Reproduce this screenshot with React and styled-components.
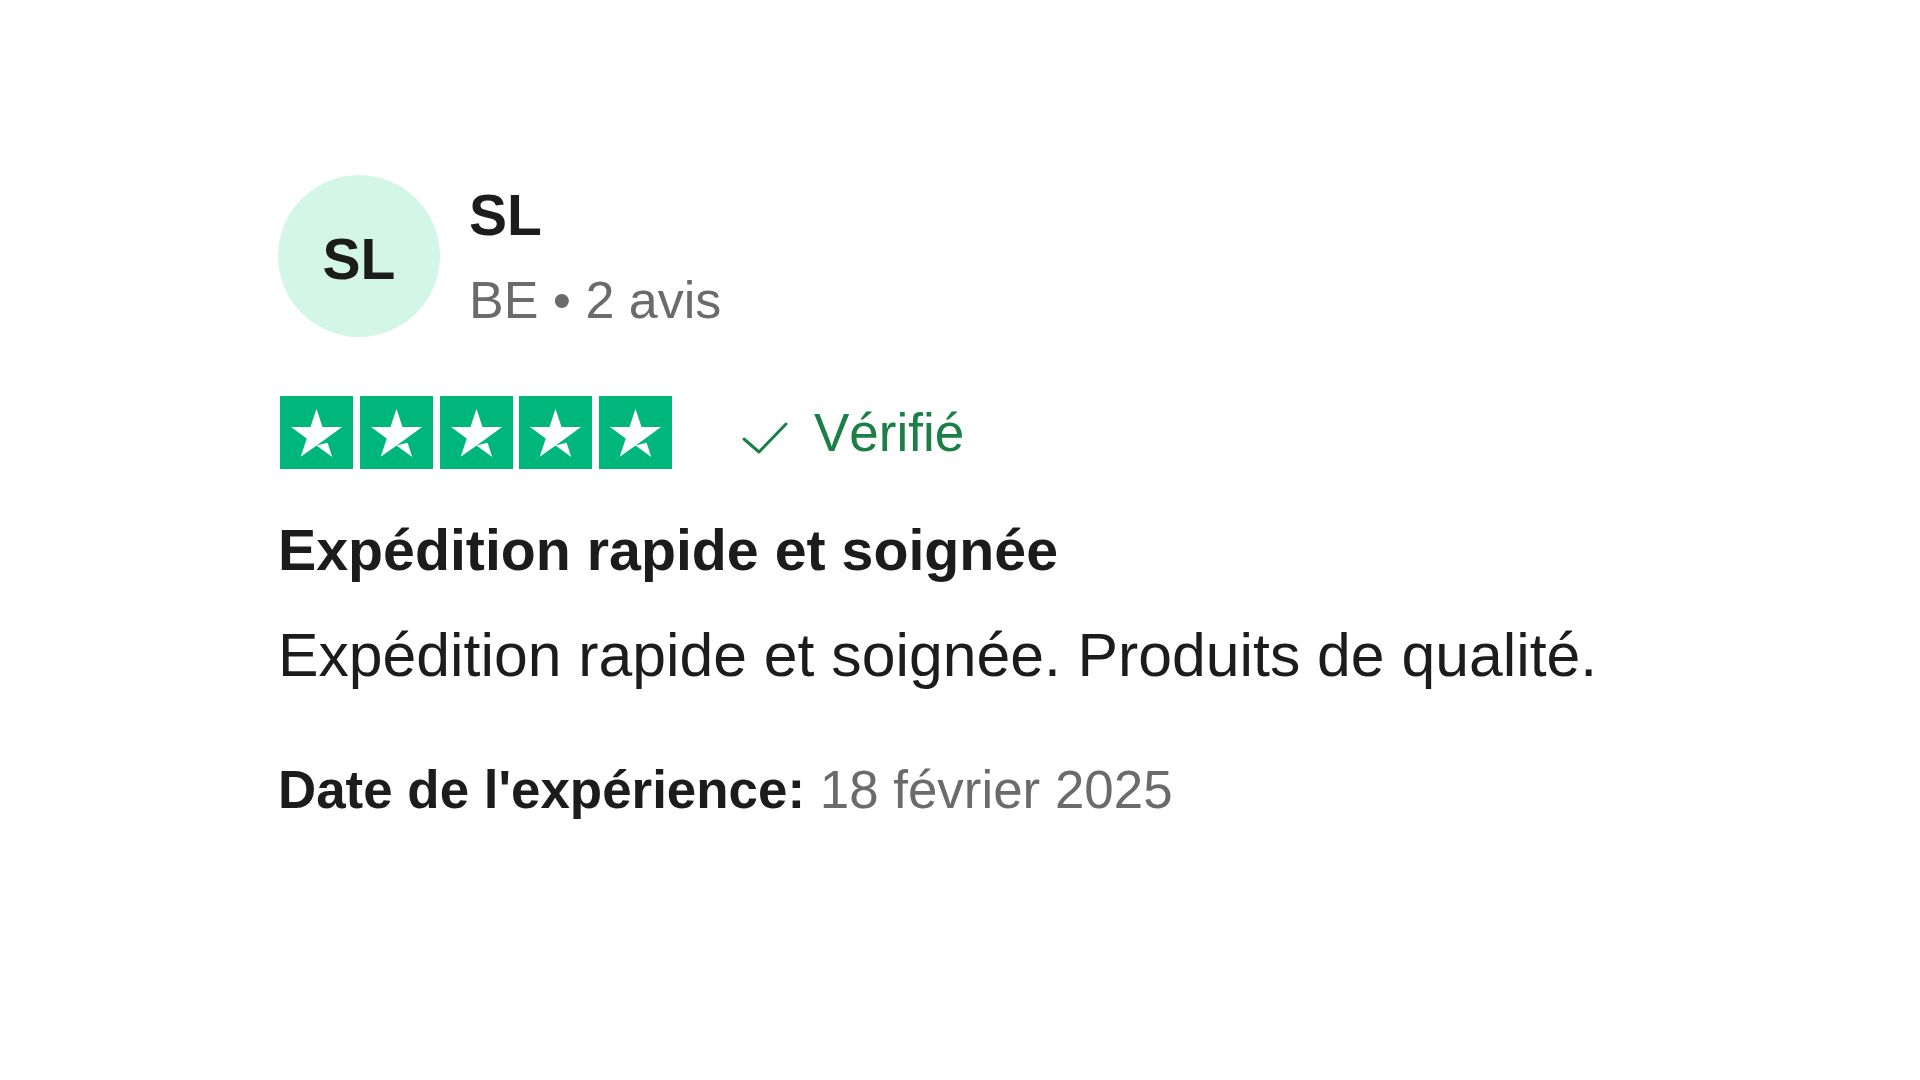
import React from 'react';
import styled, { createGlobalStyle } from 'styled-components';

const text_dark = '#1c1c1c';
const text_grey = '#6b6b6b';
const star_green = '#00b67a';
const verified_green = '#1b7f47';

const GlobalStyle = createGlobalStyle`
  html, body {
    margin: 0;
    padding: 0;
    background: #ffffff;
  }
  body {
    font-family: "Liberation Sans", Arial, Helvetica, sans-serif;
    color: ${text_dark};
  }
`;

const StarGlyph = () => (
  <svg width="73" height="73" viewBox="0 -0.35 24 24">
    <path
      fill="#ffffff"
      d="M12 15.934l3.65-.925 1.525 4.7L12 15.934zm8.4-6.075h-6.425L12 3.809l-1.975 6.05H3.6l5.2 3.75-1.975 6.05 5.2-3.75 3.2-2.3 5.175-3.75z"
    />
  </svg>
);

const Stars = ({ count = 5 }) => (
  <StarRow>
    {Array.from({ length: count }).map((_, i) => (
      <StarBox key={i}>
        <StarGlyph />
      </StarBox>
    ))}
  </StarRow>
);

const App = () => {
  return (
    <>
      <GlobalStyle />
      <Page>
        <Review>
          <Header>
            <Avatar>SL</Avatar>
            <Identity>
              <Name>SL</Name>
              <Meta>BE • 2 avis</Meta>
            </Identity>
          </Header>

          <RatingRow>
            <Stars count={5} />
            <Verified>
              <CheckIcon width="46" height="32" viewBox="0 0 46 32">
                <path
                  d="M2 17 L17 30 L44 2"
                  fill="none"
                  stroke={verified_green}
                  strokeWidth="3"
                  strokeLinecap="round"
                  strokeLinejoin="round"
                />
              </CheckIcon>
              <VerifiedText>Vérifié</VerifiedText>
            </Verified>
          </RatingRow>

          <Title>Expédition rapide et soignée</Title>
          <Body>Expédition rapide et soignée. Produits de qualité.</Body>

          <DateLine>
            <DateLabel>Date de l'expérience:</DateLabel> 18 février 2025
          </DateLine>
        </Review>
      </Page>
    </>
  );
};

const Page = styled.div`
  width: 1920px;
  height: 1080px;
  background: #ffffff;
  box-sizing: border-box;
  padding: 175px 0 0 278px;
`;

const Review = styled.article`
  display: flex;
  flex-direction: column;
  align-items: flex-start;
`;

const Header = styled.div`
  display: flex;
  flex-direction: row;
  align-items: flex-start;
  gap: 29px;
`;

const Avatar = styled.div`
  display: flex;
  align-items: center;
  justify-content: center;
  box-sizing: border-box;
  width: 162px;
  height: 162px;
  padding-top: 6px;
  border-radius: 50%;
  background-color: #d3f6e9;
  font-size: 57px;
  font-weight: 700;
  line-height: 1;
  color: ${text_dark};
`;

const Identity = styled.div`
  display: flex;
  flex-direction: column;
  padding-top: 8px;
`;

const Name = styled.div`
  font-size: 57px;
  font-weight: 700;
  line-height: 64px;
  color: ${text_dark};
`;

const Meta = styled.div`
  margin-top: 23px;
  font-size: 52px;
  line-height: 60px;
  color: ${text_grey};
`;

const RatingRow = styled.div`
  display: flex;
  flex-direction: row;
  align-items: center;
  margin-top: 59px;
  margin-left: 2px;
`;

const StarRow = styled.div`
  display: flex;
  flex-direction: row;
  gap: 6.75px;
`;

const StarBox = styled.div`
  display: flex;
  width: 73px;
  height: 73px;
  background-color: ${star_green};

  svg {
    display: block;
  }
`;

const Verified = styled.div`
  display: flex;
  flex-direction: row;
  align-items: center;
  margin-left: 70px;
  gap: 26px;
  color: ${verified_green};
`;

const CheckIcon = styled.svg`
  display: block;
  margin-top: 11px;
`;

const VerifiedText = styled.span`
  font-size: 53px;
  line-height: 60px;
`;

const Title = styled.h2`
  margin: 49px 0 0;
  font-size: 57.3px;
  font-weight: 700;
  line-height: 64px;
  color: ${text_dark};
`;

const Body = styled.p`
  margin: 39px 0 0;
  font-size: 60.7px;
  line-height: 68px;
  color: ${text_dark};
`;

const DateLine = styled.p`
  margin: 71px 0 0;
  font-size: 52.9px;
  line-height: 60px;
  color: ${text_grey};
`;

const DateLabel = styled.strong`
  font-weight: 700;
  color: ${text_dark};
`;

export default App;
